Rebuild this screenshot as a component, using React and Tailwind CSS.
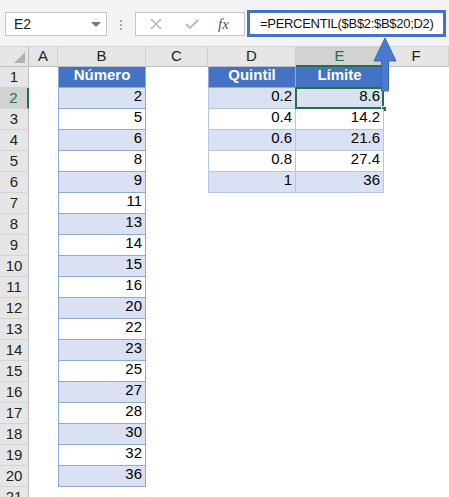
import React from 'react'

const COLS = [
  { id: 'A', w: 29 },
  { id: 'B', w: 88 },
  { id: 'C', w: 62 },
  { id: 'D', w: 88 },
  { id: 'E', w: 88 },
  { id: 'F', w: 65 },
]

const NUMEROS = [2, 5, 6, 8, 9, 11, 13, 14, 15, 16, 20, 22, 23, 25, 27, 28, 30, 32, 36]
const QUINTILES = [
  ['0.2', '8.6'],
  ['0.4', '14.2'],
  ['0.6', '21.6'],
  ['0.8', '27.4'],
  ['1', '36'],
]

const font = { fontFamily: '"Liberation Sans", Arial, sans-serif' }

function Cell({ row, col }) {
  // tabla B
  if (col === 'B' && row >= 1 && row <= 20) {
    if (row === 1) {
      return (
        <div className="h-full bg-[#4472c4] border-l border-r border-b border-[#8eaadb] text-white font-bold text-[15px] flex items-end justify-center pb-[1px]">
          Número
        </div>
      )
    }
    const shaded = row % 2 === 0
    return (
      <div className={`h-full border-l border-r border-b border-[#8eaadb] text-[15px] text-black flex items-end justify-end pr-[3px] pb-[1px] ${shaded ? 'bg-[#d9e1f2]' : 'bg-white'}`}>
        {NUMEROS[row - 2]}
      </div>
    )
  }
  // tabla D-E
  if ((col === 'D' || col === 'E') && row >= 1 && row <= 6) {
    if (row === 1) {
      return (
        <div className={`h-full bg-[#4472c4] border-b border-r border-[#8eaadb] ${col === 'D' ? 'border-l' : ''} text-white font-bold text-[15px] flex items-end justify-center pb-[1px]`}>
          {col === 'D' ? 'Quintil' : 'Límite'}
        </div>
      )
    }
    const shaded = row % 2 === 0
    const val = QUINTILES[row - 2][col === 'D' ? 0 : 1]
    const selected = col === 'E' && row === 2
    return (
      <div className={`relative h-full border-b border-r border-[#b4c6e7] ${col === 'D' ? 'border-l' : ''} text-[15px] text-black flex items-end justify-end pr-[3px] pb-[1px] ${shaded ? 'bg-[#d9e1f2]' : 'bg-white'}`}>
        {val}
        {selected && (
          <>
            <div className="absolute -left-[1px] -top-[1px] -right-[1px] -bottom-[1px] border-2 border-[#217346]" />
            <div className="absolute -right-[4px] -bottom-[4px] w-[6px] h-[6px] bg-[#217346] border border-white" />
          </>
        )}
      </div>
    )
  }
  return <div className="h-full bg-white" />
}

export default function App() {
  const rows = Array.from({ length: 21 }, (_, i) => i + 1)

  return (
    <div className="relative w-[449px] h-[497px] overflow-hidden bg-white" style={font}>
      {/* barra de fórmulas */}
      <div className="h-[47px] bg-[#f3f3f3] border-b border-[#d4d4d4] flex items-start pt-[10px]">
        <div className="ml-[5px] mt-[2px] w-[102px] h-[24px] bg-white border border-[#c6c6c6] flex items-center justify-between pl-[8px] pr-[5px]">
          <span className="text-[14px] text-[#222]">E2</span>
          <span className="w-0 h-0 border-l-[5px] border-r-[5px] border-t-[5px] border-l-transparent border-r-transparent border-t-[#777]" />
        </div>
        <div className="ml-[13px] mt-[10px] flex flex-col gap-[2px]">
          <span className="w-[2px] h-[2px] bg-[#aaa]" />
          <span className="w-[2px] h-[2px] bg-[#aaa]" />
          <span className="w-[2px] h-[2px] bg-[#aaa]" />
        </div>
        <div className="ml-[13px] mt-[2px] w-[110px] h-[24px] bg-white border border-[#c6c6c6] flex items-center">
          <svg width="14" height="14" viewBox="0 0 14 14" className="ml-[13px]">
            <path d="M2 2 L12 12 M12 2 L2 12" stroke="#b8b8b8" strokeWidth="1.5" fill="none" />
          </svg>
          <svg width="16" height="14" viewBox="0 0 16 14" className="ml-[21px]">
            <path d="M2 7 L6 11 L14 3" stroke="#b8b8b8" strokeWidth="1.8" fill="none" />
          </svg>
          <span className="ml-[18px] text-[15px] italic text-[#555]" style={{ fontFamily: '"Liberation Serif", serif' }}>fx</span>
        </div>
        <div className="ml-[2px] w-[199px] h-[27px] bg-white border-[3px] border-[#4472c4] flex items-center pl-[10px]">
          <span className="text-[13px] tracking-[-0.3px] text-[#111] whitespace-nowrap">=PERCENTIL($B$2:$B$20;D2)</span>
        </div>
      </div>

      {/* encabezados de columna */}
      <div className="flex h-[20px]">
        <div className="relative w-[29px] h-full bg-[#e6e6e6] border-r border-b border-[#bdbdbd]">
          <span className="absolute right-[3px] bottom-[3px] w-0 h-0" style={{ borderBottom: '11px solid #b3b3b3', borderLeft: '11px solid transparent' }} />
        </div>
        {COLS.map(c => {
          const sel = c.id === 'E'
          return (
            <div
              key={c.id}
              style={{ width: c.w }}
              className={`h-full flex items-center justify-center text-[15px] border-r ${sel ? 'bg-[#d2d2d2] text-[#217346] border-b-2 border-b-[#217346] border-r-[#bdbdbd]' : 'bg-[#e6e6e6] text-[#222] border-b border-b-[#bdbdbd] border-r-[#d0d0d0]'}`}
            >
              {c.id}
            </div>
          )
        })}
      </div>

      {/* filas */}
      {rows.map(r => {
        const sel = r === 2
        return (
          <div key={r} className="flex h-[21px]">
            <div className={`w-[29px] h-full flex items-center justify-center text-[15px] border-b border-b-[#d4d4d4] ${sel ? 'bg-[#d2d2d2] text-[#217346] border-r-2 border-r-[#217346]' : 'bg-[#e6e6e6] text-[#222] border-r border-r-[#bdbdbd]'}`}>
              {r}
            </div>
            {COLS.map(c => (
              <div key={c.id} style={{ width: c.w }} className="h-full">
                <Cell row={r} col={c.id} />
              </div>
            ))}
          </div>
        )
      })}

      {/* flecha */}
      <svg className="absolute left-0 top-0 pointer-events-none" width="449" height="497" viewBox="0 0 449 497">
        <path d="M385 38 L396 61 L388.5 61 L388.5 91 L381.5 91 L381.5 61 L374 61 Z" fill="#4a7bd0" stroke="#3d68b8" strokeWidth="1" />
      </svg>
    </div>
  )
}
